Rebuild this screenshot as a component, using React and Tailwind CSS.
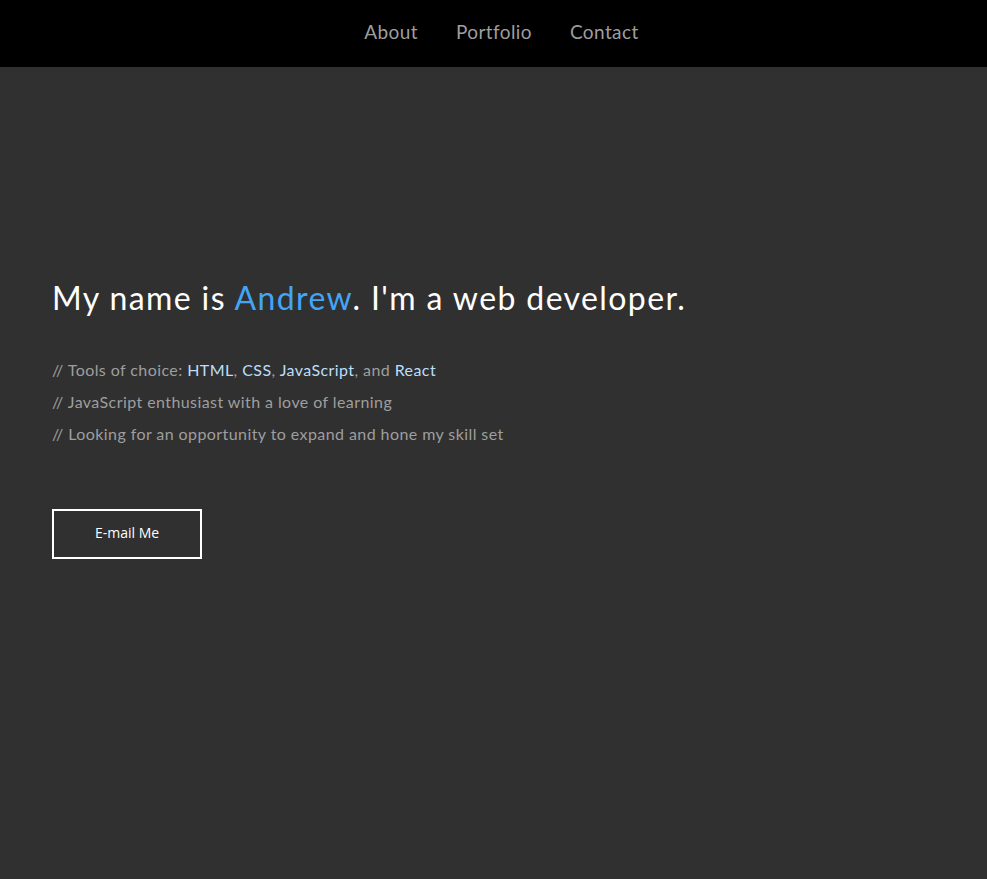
import React from 'react';

function App() {
  return (
    <div className="min-h-screen bg-[#303030] font-['Lato','Open_Sans',sans-serif]">
      {/* Nav */}
      <nav className="h-[67px] bg-black flex items-center justify-center pl-[16px] pb-[2px]">
        <ul className="flex gap-[38px] text-[19px] tracking-[0.4px] text-[#9e9e9e]">
          <li>About</li>
          <li>Portfolio</li>
          <li>Contact</li>
        </ul>
      </nav>

      {/* Hero */}
      <section className="px-[52px] pt-[210px]">
        <h1 className="text-[32px] leading-[42px] tracking-[1.4px] text-white">
          My name is <span className="text-[#42a5f5]">Andrew</span>. I'm a web developer.
        </h1>
        <div className="mt-[35px] text-[16px] leading-[32px] tracking-[0.42px] text-[#9e9e9e]">
          <p>
            // Tools of choice: <span className="text-[#bbdefb]">HTML</span>,{' '}
            <span className="text-[#bbdefb]">CSS</span>,{' '}
            <span className="text-[#bbdefb]">JavaScript</span>, and{' '}
            <span className="text-[#bbdefb]">React</span>
          </p>
          <p>// JavaScript enthusiast with a love of learning</p>
          <p>// Looking for an opportunity to expand and hone my skill set</p>
        </div>
        <button className="mt-[59px] w-[150px] h-[50px] pb-[3px] border-2 border-white text-white text-[14px] font-['Open_Sans',sans-serif]">
          E-mail Me
        </button>
      </section>
    </div>
  );
}

export default App;
